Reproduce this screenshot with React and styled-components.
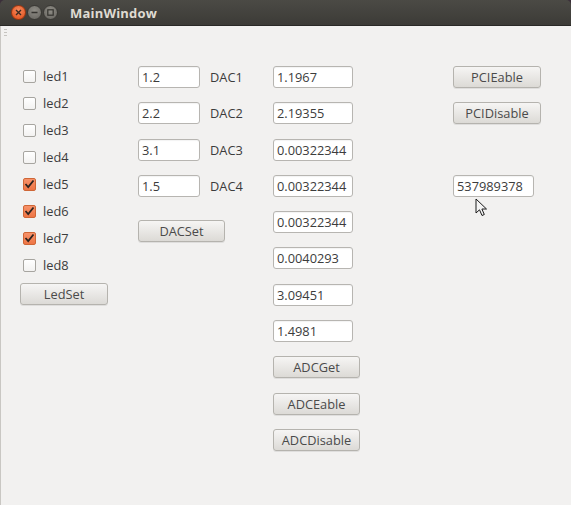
import styled, { createGlobalStyle } from 'styled-components';

const GlobalStyle = createGlobalStyle`
  html, body {
    margin: 0;
    padding: 0;
    background: #3b2f3a;
  }
  * { box-sizing: border-box; }
`;

const Window = styled.div`
  width: 571px;
  height: 505px;
  display: flex;
  flex-direction: column;
  font-family: "Open Sans", "DejaVu Sans", sans-serif;
  font-size: 12.8px;
  color: #3c3c3c;
  border-radius: 5px 5px 0 0;
  overflow: hidden;
`;

const TitleBar = styled.div`
  height: 26px;
  flex: none;
  display: flex;
  align-items: center;
  padding-left: 11px;
  gap: 1px;
  background: linear-gradient(#4b4a45, #3c3b37);
  border-bottom: 1px solid #2a2927;
`;

const WinButton = styled.div`
  width: 15px;
  height: 15px;
  border-radius: 50%;
  display: flex;
  align-items: center;
  justify-content: center;
  background: ${p => p.$close
    ? 'radial-gradient(circle at 50% 35%, #f68a5e, #df4b16)'
    : 'radial-gradient(circle at 50% 35%, #8f8d86, #64625d)'};
  border: 1px solid ${p => (p.$close ? '#9c3610' : '#3a3935')};
  color: #3a2a22;
`;

const Title = styled.div`
  margin-left: 11px;
  font-weight: bold;
  font-size: 13px;
  color: #dfdbd2;
  letter-spacing: 0.2px;
`;

const Body = styled.div`
  flex: 1;
  position: relative;
  background: #f2f1f0;
  border-left: 1px solid #c9c7c3;
  padding: 40px 0 0 19px;
  display: grid;
  grid-template-columns: 118px 135px 180px auto;
  align-items: start;
`;

const Grip = styled.div`
  position: absolute;
  left: 3px;
  top: 3px;
  display: flex;
  flex-direction: column;
  gap: 2px;
  span {
    width: 3px;
    height: 1px;
    background: #c6c4c0;
  }
`;

const LedColumn = styled.div`
  display: flex;
  flex-direction: column;
  gap: 9px;
  padding-top: 1px;
`;

const CheckRow = styled.label`
  height: 18px;
  display: flex;
  align-items: center;
  gap: 7px;
  padding-left: 3px;
`;

const Box = styled.span`
  width: 13px;
  height: 13px;
  border-radius: 2px;
  display: flex;
  align-items: center;
  justify-content: center;
  border: 1px solid ${p => (p.$checked ? '#cf6636' : '#a7a5a0')};
  background: ${p => (p.$checked
    ? 'linear-gradient(#f7926a, #ee7545)'
    : 'linear-gradient(#ffffff, #f3f2f1)')};
`;

const Stack = styled.div`
  display: flex;
  flex-direction: column;
  gap: 14.3px;
`;

const FieldRow = styled.div`
  height: 22px;
  display: flex;
  align-items: center;
  gap: 10px;
`;

const Field = styled.div`
  width: ${p => p.$w}px;
  height: 22px;
  background: #fff;
  border: 1px solid #b7b5b1;
  border-radius: 3px;
  padding: 0 3px;
  display: flex;
  align-items: center;
  box-shadow: inset 0 1px 1px rgba(0, 0, 0, 0.05);
`;

const Empty = styled.div`
  height: 22px;
`;

const Button = styled.div`
  width: ${p => p.$w}px;
  height: 22px;
  margin-top: ${p => p.$mt || 0}px;
  border: 1px solid #b5b3ae;
  border-radius: 3px;
  background: linear-gradient(#f6f5f4, #dcdad6);
  box-shadow: 0 1px 0 rgba(0, 0, 0, 0.08);
  display: flex;
  align-items: center;
  justify-content: center;
  color: #4a4a4a;
`;

const Cursor = styled.svg`
  position: absolute;
  left: 474px;
  top: 172px;
`;

const Check = () => (
  <svg width="11" height="10" viewBox="0 0 11 10">
    <path d="M1.5 5 L4.2 8 L9.5 1.5" fill="none" stroke="#2e2420" strokeWidth="1.8" />
  </svg>
);

const leds = [false, false, false, false, true, true, true, false];
const dacs = ['1.2', '2.2', '3.1', '1.5'];
const adcs = ['1.1967', '2.19355', '0.00322344', '0.00322344', '0.00322344', '0.0040293', '3.09451', '1.4981'];

export default function App() {
  return (
    <>
      <GlobalStyle />
      <Window>
        <TitleBar>
          <WinButton $close>
            <svg width="7" height="7" viewBox="0 0 7 7">
              <path d="M1 1 L6 6 M6 1 L1 6" stroke="#3a2a22" strokeWidth="1.4" />
            </svg>
          </WinButton>
          <WinButton>
            <svg width="7" height="7" viewBox="0 0 7 7">
              <path d="M0.5 3.5 H6.5" stroke="#34332f" strokeWidth="1.6" />
            </svg>
          </WinButton>
          <WinButton>
            <svg width="7" height="7" viewBox="0 0 7 7">
              <rect x="0.8" y="0.8" width="5.4" height="5.4" fill="none" stroke="#34332f" strokeWidth="1.2" />
            </svg>
          </WinButton>
          <Title>MainWindow</Title>
        </TitleBar>
        <Body>
          <Grip><span /><span /><span /></Grip>
          <LedColumn>
            {leds.map((on, i) => (
              <CheckRow key={i}>
                <Box $checked={on}>{on && <Check />}</Box>
                led{i + 1}
              </CheckRow>
            ))}
            <Button $w={88} $mt={0}>LedSet</Button>
          </LedColumn>
          <Stack>
            {dacs.map((v, i) => (
              <FieldRow key={i}>
                <Field $w={62}>{v}</Field>
                DAC{i + 1}
              </FieldRow>
            ))}
            <Button $w={87} $mt={9}>DACSet</Button>
          </Stack>
          <Stack>
            {adcs.map((v, i) => (
              <Field key={i} $w={80}>{v}</Field>
            ))}
            <Button $w={87}>ADCGet</Button>
            <Button $w={87}>ADCEable</Button>
            <Button $w={87}>ADCDisable</Button>
          </Stack>
          <Stack>
            <Button $w={88}>PCIEable</Button>
            <Button $w={88}>PCIDisable</Button>
            <Empty />
            <Field $w={81}>537989378</Field>
          </Stack>
          <Cursor width="14" height="20" viewBox="0 0 14 20">
            <path d="M1 1 L1 15 L4.5 11.8 L7 17.5 L9.3 16.5 L6.9 11 L11.5 11 Z" fill="#f4f4f4" stroke="#1a1a1a" strokeWidth="1" strokeLinejoin="round" />
          </Cursor>
        </Body>
      </Window>
    </>
  );
}
